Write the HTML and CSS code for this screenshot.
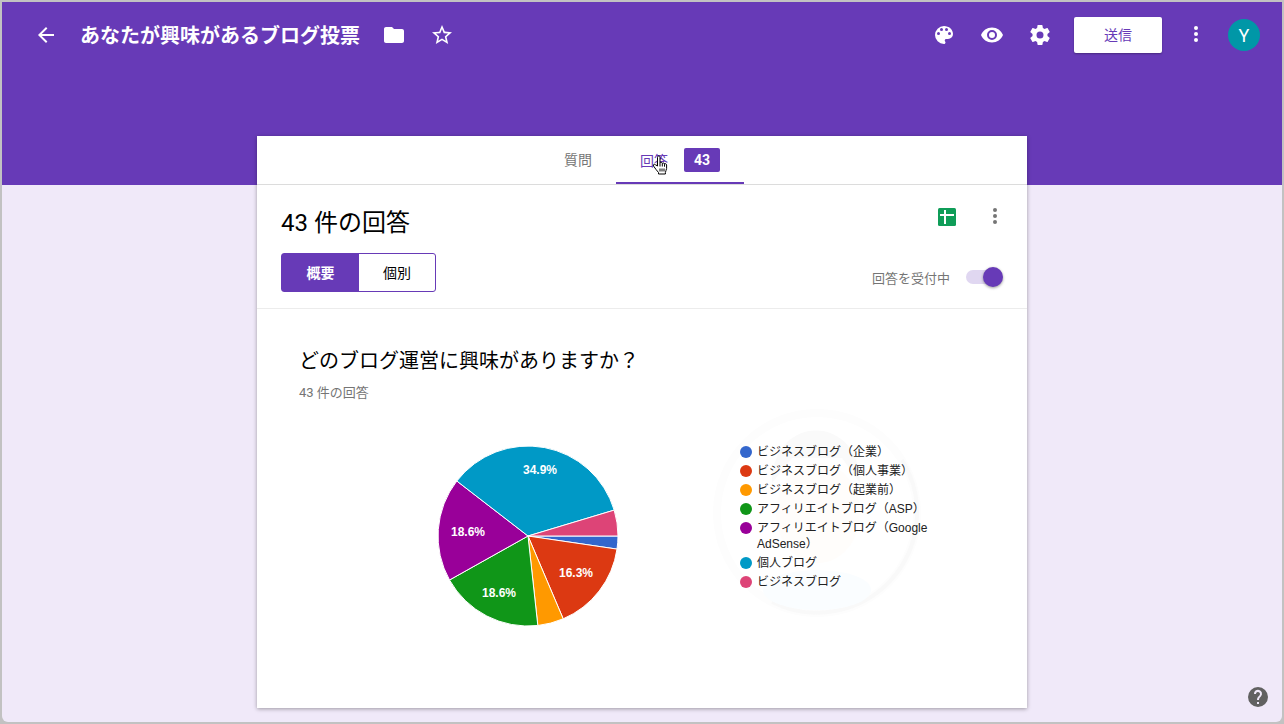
FILE: index.html
```html
<!DOCTYPE html>
<html lang="ja">
<head>
<meta charset="utf-8">
<title>あなたが興味があるブログ投票</title>
<link rel="stylesheet" href="styles.css">
</head>
<body>
<div class="app">
  <header class="topbar">
    <button class="icon-btn" aria-label="戻る"><svg viewBox="0 0 24 24"><path d="M20 11H7.8l5.6-5.6L12 4l-8 8 8 8 1.4-1.4L7.8 13H20z"/></svg></button>
    <h1 class="form-title">あなたが興味があるブログ投票</h1>
    <button class="icon-btn folder" aria-label="フォルダに移動"><svg viewBox="0 0 24 24"><path d="M10 4H4c-1.1 0-2 .9-2 2v12c0 1.100.9 2 2 2h16c1.100 0 2-.9 2-2V8c0-1.100-.9-2-2-2h-8z"/></svg></button>
    <button class="icon-btn" aria-label="スター"><svg viewBox="0 0 24 24"><path d="M22 9.240l-7.190-.62L12 2 9.190 8.630 2 9.240l5.460 4.730L5.820 21 12 17.270 18.180 21l-1.630-7.030zM12 15.400l-3.760 2.270 1-4.280-3.320-2.880 4.380-.38L12 6.100l1.710 4.040 4.380.38-3.320 2.880 1 4.280z"/></svg></button>
    <div class="actions">
      <button class="icon-btn" aria-label="テーマ"><svg viewBox="0 0 24 24"><path d="M12 3a9 9 0 0 0 0 18c.83 0 1.500-.67 1.500-1.500 0-.39-.15-.74-.39-1.010-.23-.26-.38-.61-.38-.99 0-.83.67-1.500 1.500-1.500H16a5 5 0 0 0 5-5c0-4.420-4.030-8-9-8zm-5.500 9a1.500 1.500 0 1 1 0-3 1.500 1.500 0 0 1 0 3zm3-4a1.500 1.500 0 1 1 0-3 1.500 1.500 0 0 1 0 3zm5 0a1.500 1.500 0 1 1 0-3 1.500 1.500 0 0 1 0 3zm3 4a1.500 1.500 0 1 1 0-3 1.500 1.500 0 0 1 0 3z"/></svg></button>
      <button class="icon-btn" aria-label="プレビュー"><svg viewBox="0 0 24 24"><path d="M12 4.500C7 4.500 2.730 7.610 1 12c1.730 4.390 6 7.500 11 7.500s9.270-3.110 11-7.500c-1.730-4.390-6-7.500-11-7.500zM12 17a5 5 0 1 1 0-10 5 5 0 0 1 0 10zm0-8a3 3 0 1 0 0 6 3 3 0 0 0 0-6z"/></svg></button>
      <button class="icon-btn" aria-label="設定"><svg viewBox="0 0 24 24"><path d="M19.430 12.980c.04-.32.07-.64.07-.98s-.03-.66-.07-.98l2.110-1.650c.19-.15.24-.42.12-.64l-2-3.460c-.12-.22-.39-.3-.61-.22l-2.490 1c-.52-.4-1.080-.73-1.690-.98l-.38-2.650A.49.49 0 0 0 14 2h-4c-.25 0-.46.18-.49.42l-.38 2.650c-.61.25-1.170.59-1.690.98l-2.490-1c-.23-.09-.49 0-.61.22l-2 3.460c-.13.22-.07.49.12.64l2.110 1.650c-.04.32-.07.65-.07.98s.03.66.07.98l-2.110 1.650c-.19.15-.24.42-.12.64l2 3.460c.12.22.39.3.61.22l2.490-1c.52.4 1.080.73 1.690.98l.38 2.650c.03.24.24.42.49.42h4c.25 0 .46-.18.49-.42l.38-2.650c.61-.25 1.170-.59 1.690-.98l2.490 1c.23.09.49 0 .61-.22l2-3.460c.12-.22.07-.49-.12-.64zM12 15.500a3.500 3.500 0 1 1 0-7 3.500 3.500 0 0 1 0 7z"/></svg></button>
      <button class="send">送信</button>
      <button class="icon-btn" aria-label="その他"><svg viewBox="0 0 24 24"><circle cx="12" cy="5" r="2"/><circle cx="12" cy="11" r="2"/><circle cx="12" cy="17" r="2"/></svg></button>
      <button class="avatar" aria-label="アカウント">Y</button>
    </div>
  </header>

  <main class="card">
    <nav class="tabs">
      <button class="tab">質問</button>
      <button class="tab active">回答<span class="count">43</span>
        <svg class="pointer" viewBox="0 0 16 20"><path d="M5.500 11V2.500c0-2 2.500-2 2.500 0V8c.6-1 2.200-.8 2.300.4.7-.8 2.100-.5 2.200.6.8-.6 2.100-.2 2.100 1v3.500c0 1.500-1.200 2.500-1.200 4V19H6.500v-1.500C5 15.500 3 13.500 1.500 11c-.8-1.500 1-2.400 2-1.200z"/><path d="M8 8v3.500M10.300 8.500v3M12.500 9.200v2.500M8 13.500v3M10 13.500v3M12 13.500v3"/></svg>
      </button>
    </nav>

    <section class="summary">
      <div class="row">
        <h2 class="heading">43 件の回答</h2>
        <div class="tools">
          <button class="icon-btn" aria-label="スプレッドシート"><svg viewBox="0 0 24 24"><rect x="3" y="3" width="18" height="18" rx="1.500" fill="#0f9d58"/><path d="M9 5h2v4h8v2h-8v8H9v-8H5V9h4z" fill="#fff"/></svg></button>
          <button class="icon-btn gray" aria-label="メニュー"><svg viewBox="0 0 24 24"><circle cx="12" cy="5" r="2"/><circle cx="12" cy="11" r="2"/><circle cx="12" cy="17" r="2"/></svg></button>
        </div>
      </div>
      <div class="row">
        <div class="segments">
          <button class="segment selected">概要</button>
          <button class="segment">個別</button>
        </div>
        <label class="accepting">回答を受付中<input class="switch" type="checkbox" role="switch" checked></label>
      </div>
    </section>

    <section class="question">
      <h3 class="question-title">どのブログ運営に興味がありますか？</h3>
      <p class="question-sub">43 件の回答</p>
      <div class="chart">
        <svg class="pie" viewBox="0 0 180 180" role="img" aria-label="回答の円グラフ">
          <g stroke="#fff" stroke-width="1">
            <path fill="#3366cc" d="M90 90L180 90A90 90 0 0 1 179 103.100Z"/>
            <path fill="#dc3912" d="M90 90L179 103.100A90 90 0 0 1 125.200 172.800Z"/>
            <path fill="#ff9900" d="M90 90L125.200 172.800A90 90 0 0 1 99.800 179.500Z"/>
            <path fill="#109618" d="M90 90L99.800 179.500A90 90 0 0 1 11.500 134Z"/>
            <path fill="#990099" d="M90 90L11.500 134A90 90 0 0 1 18.800 35Z"/>
            <path fill="#0099c6" d="M90 90L18.800 35A90 90 0 0 1 176.200 64.100Z"/>
            <path fill="#dd4477" d="M90 90L176.200 64.100A90 90 0 0 1 180 90Z"/>
          </g>
          <g class="pie-label">
            <text x="102" y="28">34.9%</text>
            <text x="30" y="90">18.6%</text>
            <text x="61" y="151">18.6%</text>
            <text x="138" y="131">16.3%</text>
          </g>
        </svg>
        <div class="legend-area">
          <svg class="watermark" viewBox="0 0 210 210"><circle cx="105" cy="105" r="100" fill="none" stroke="#fdfdfd" stroke-width="8"/><path d="M190 52A100 100 0 0 1 60 194" fill="none" stroke="#f9f9f9" stroke-width="4"/><path d="M60 75C60 5 148 5 148 75L130 50H80z" fill="#fafafa"/><ellipse cx="106" cy="105" rx="42" ry="50" fill="#fffdfb"/><ellipse cx="105" cy="182" rx="54" ry="20" fill="#fafdff"/></svg>
          <ul class="legend">
            <li class="c1">ビジネスブログ（企業）</li>
            <li class="c2">ビジネスブログ（個人事業）</li>
            <li class="c3">ビジネスブログ（起業前）</li>
            <li class="c4">アフィリエイトブログ（ASP）</li>
            <li class="c5">アフィリエイトブログ（Google AdSense）</li>
            <li class="c6">個人ブログ</li>
            <li class="c7">ビジネスブログ</li>
          </ul>
        </div>
      </div>
    </section>
  </main>
  <button class="help" aria-label="ヘルプ"><svg viewBox="0 0 24 24"><path d="M12 2a10 10 0 1 0 0 20 10 10 0 0 0 0-20zm1 17h-2v-2h2zm2.070-7.750-.9.920C13.450 12.900 13 13.500 13 15h-2v-.5c0-1.100.45-2.100 1.170-2.830l1.240-1.260A2 2 0 1 0 10 9H8a4 4 0 1 1 7.070 2.250z"/></svg></button>
</div>
</body>
</html>
```
FILE: styles.css
```css
* { box-sizing: border-box; }

body {
  margin: 0;
  padding: 2px;
  min-height: 100vh;
  display: flex;
  background: #c2c2c2;
  font-family: Roboto, "Noto Sans CJK JP", sans-serif;
  color: #000;
}

button {
  border: 0;
  padding: 0;
  background: none;
  font: inherit;
  color: inherit;
  cursor: pointer;
}

h1, h2, h3, p, ul { margin: 0; padding: 0; font-weight: 400; }

.app {
  flex: 1;
  position: relative;
  padding-bottom: 14px;
  border-radius: 0 0 6px 6px;
  background: linear-gradient(#673ab7 183px, #f0e9f9 183px);
  display: flex;
  flex-direction: column;
}

.topbar {
  height: 66px;
  margin-bottom: 68px;
  padding: 0 22px 0 32px;
  display: flex;
  align-items: center;
  color: #fff;
}

.icon-btn { width: 24px; height: 24px; flex: none; }
.icon-btn svg, .help svg { display: block; width: 24px; height: 24px; fill: currentColor; }
.icon-btn.gray { color: #757575; }

.form-title {
  margin: 0 22px;
  padding-top: 2px;
  font-size: 20px;
  line-height: 28px;
  font-weight: 700;
  white-space: nowrap;
}
.folder { margin-right: 24px; }

.actions { margin-left: auto; display: flex; align-items: center; gap: 24px; }

.send {
  width: 88px;
  height: 36px;
  margin: 0 -2px;
  padding-bottom: 2px;
  border-radius: 2px;
  background: #fff;
  color: #673ab7;
  font-size: 14px;
  box-shadow: 0 1px 2px rgba(0, 0, 0, .3);
}

.avatar {
  width: 32px;
  height: 32px;
  margin-left: -4px;
  border-radius: 50%;
  background: #0097a7;
  font-size: 18px;
}

.card {
  width: 60%;
  min-width: 770px;
  flex: 1;
  margin: 0 auto;
  background: #fff;
  box-shadow: 0 1px 4px rgba(0, 0, 0, .35);
}

.tabs {
  height: 49px;
  display: flex;
  justify-content: center;
  border-bottom: 1px solid #dcdcdc;
  font-size: 14px;
  color: #757575;
}
.tab { position: relative; padding: 0 24px 2px; }
.tab.active {
  display: flex;
  align-items: center;
  gap: 16px;
  padding-top: 2px;
  padding-bottom: 0;
  color: #673ab7;
  border-bottom: 2px solid #673ab7;
}
.count {
  width: 36px;
  height: 24px;
  border-radius: 2px;
  background: #673ab7;
  color: #fff;
  font-weight: 700;
  line-height: 24px;
}
.pointer {
  position: absolute;
  left: 36px;
  top: 19px;
  width: 16px;
  height: 20px;
  fill: #fff;
  stroke: #000;
  stroke-width: 1;
}

.summary {
  padding: 20px 20px 15px 24px;
  border-bottom: 1px solid #ececec;
}
.row { display: flex; justify-content: space-between; align-items: flex-start; }
.heading { font-size: 24px; line-height: 36px; margin-bottom: 12px; }
.tools { display: flex; gap: 24px; }

.segments {
  height: 39px;
  display: flex;
  border: 1px solid #673ab7;
  border-radius: 3px;
  font-size: 14px;
}
.segment { width: 76px; padding-bottom: 2px; }
.segment.selected { width: 77px; background: #673ab7; color: #fff; font-weight: 700; }

.accepting {
  height: 48px;
  margin-bottom: -8px;
  margin-right: 4px;
  display: flex;
  align-items: center;
  gap: 16px;
  font-size: 13px;
  color: #757575;
}
.switch {
  appearance: none;
  width: 37px;
  height: 20px;
  margin: 0;
  display: flex;
  justify-content: flex-end;
}
.switch::before {
  content: "";
  flex: 1;
  height: 14px;
  margin: 3px -10px 0 0;
  border-radius: 7px;
  background: #e0d7f1;
}
.switch::after {
  content: "";
  width: 20px;
  height: 20px;
  border-radius: 50%;
  background: #673ab7;
  box-shadow: 0 1px 3px rgba(0, 0, 0, .4);
}

.question { padding: 38px 42px 80px; }
.question-title { font-size: 20px; line-height: 28px; }
.question-sub { margin-top: 8px; font-size: 13px; line-height: 20px; color: #757575; }

.chart { display: flex; margin-top: 43px; padding-left: 139px; }
.pie { width: 180px; height: 180px; flex: none; }
.pie-label {
  fill: #fff;
  font: 700 12px "Liberation Sans", Arial, sans-serif;
  text-anchor: middle;
}

.legend-area { position: relative; margin-left: 122px; }
.watermark { position: absolute; left: -28px; top: -38px; width: 210px; height: 210px; }
.legend {
  position: relative;
  width: 196px;
  margin-top: -2px;
  display: flex;
  flex-direction: column;
  gap: 3px;
  list-style: none;
  font: 12px/16px "Liberation Sans", "Noto Sans CJK JP", sans-serif;
  color: #222;
}
.legend li { display: flex; gap: 5px; }
.legend li::before {
  content: "";
  flex: none;
  width: 12px;
  height: 12px;
  margin-top: 2px;
  border-radius: 50%;
  background: var(--dot);
}
.c1 { --dot: #3366cc; }
.c2 { --dot: #dc3912; }
.c3 { --dot: #ff9900; }
.c4 { --dot: #109618; }
.c5 { --dot: #990099; }
.c6 { --dot: #0099c6; }
.c7 { --dot: #dd4477; }

.help { position: absolute; right: 12px; bottom: 13px; width: 24px; height: 24px; color: #616161; }
```
